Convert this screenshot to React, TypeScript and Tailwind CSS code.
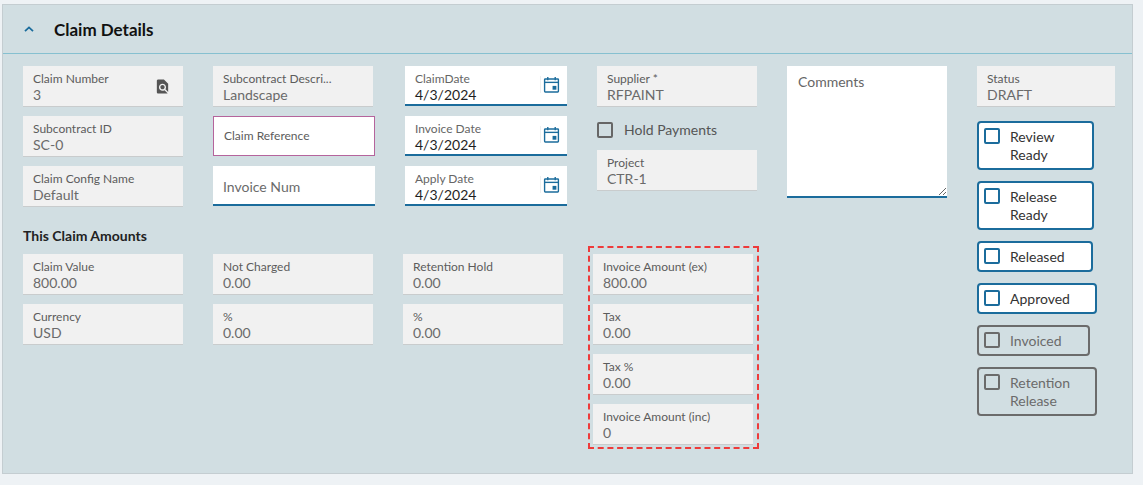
import React from "react";

const blue = "#1b6c9c";

function SearchDocIcon() {
  return (
    <svg viewBox="0 0 24 24" className="h-[17px] w-[17px] fill-[#555]" aria-hidden="true">
      <path d="M20 19.59V8l-6-6H6c-1.1 0-1.99.9-1.99 2L4 20c0 1.1.89 2 1.99 2H18c.45 0 .85-.15 1.19-.4l-4.43-4.43c-.8.52-1.74.83-2.76.83-2.76 0-5-2.24-5-5s2.24-5 5-5 5 2.24 5 5c0 1.02-.31 1.96-.83 2.75L20 19.59zM9 13c0 1.66 1.34 3 3 3s3-1.34 3-3-1.34-3-3-3-3 1.34-3 3z" />
    </svg>
  );
}

function CalendarIcon() {
  return (
    <svg viewBox="0 0 16 16" className="h-[17px] w-[17px]" fill="none" stroke={blue} strokeWidth="1.3" aria-hidden="true">
      <rect x="1.5" y="2.8" width="13" height="12.2" rx="0.6" />
      <line x1="1.5" y1="6" x2="14.5" y2="6" />
      <line x1="4.5" y1="1" x2="4.5" y2="4" />
      <line x1="11.5" y1="1" x2="11.5" y2="4" />
      <rect x="9" y="9.3" width="3.6" height="3.6" fill={blue} stroke="none" />
    </svg>
  );
}

function ReadField({ label, value, icon }: { label: string; value: string; icon?: React.ReactNode }) {
  return (
    <div className="flex h-[40px] w-[160px] items-start justify-between bg-[#f1f1f1] pl-[10px] pr-[12px] shadow-[0_1px_0_#c9cccd]">
      <div className="flex flex-col pt-[6px]">
        <span className="text-[12px] leading-[14px] text-[#5c5c5c]">{label}</span>
        <span className="text-[14px] leading-[18px] text-[#6a6a6a]">{value}</span>
      </div>
      {icon && <div className="self-center pt-[1px]">{icon}</div>}
    </div>
  );
}

function DateField({ label, value }: { label: string; value: string }) {
  return (
    <div className="flex h-[40px] w-[162px] items-start justify-between border-b-2 border-[#1b6c9c] bg-white pl-[10px] pr-[7px]">
      <div className="flex flex-col pt-[6px]">
        <span className="text-[12px] leading-[14px] text-[#666]">{label}</span>
        <span className="text-[14px] leading-[18px] text-[#1f1f1f]">{value}</span>
      </div>
      <div className="mt-[10px] border-l border-[#f0f0f0] pl-[2px]">
        <CalendarIcon />
      </div>
    </div>
  );
}

function CheckCard({ label, width, disabled }: { label: string; width: string; disabled?: boolean }) {
  return (
    <div
      className={
        disabled
          ? `flex items-start gap-[10px] rounded-[4px] border-2 border-[#6b6b6b] px-[5px] pb-[4px] pt-[5px] ${width}`
          : `flex items-start gap-[10px] rounded-[4px] border-2 border-[#1b6c9c] bg-white px-[5px] pb-[4px] pt-[5px] ${width}`
      }
    >
      <span
        className={
          disabled
            ? "h-[16px] w-[16px] shrink-0 rounded-[2px] border-2 border-[#6b6b6b]"
            : "h-[16px] w-[16px] shrink-0 rounded-[2px] border-2 border-[#1b6c9c]"
        }
      />
      <span className={disabled ? "text-[14px] leading-[18px] text-[#6b6b6b]" : "text-[14px] leading-[18px] text-[#333]"}>
        {label}
      </span>
    </div>
  );
}

export default function App() {
  return (
    <div className="min-h-screen bg-[#eef2f5] pl-[2px] pt-[4px] font-['Lato',sans-serif]">
      <section className="h-[470px] w-[1131px] border border-[#c4cdd1] bg-[#d1dee2]">
        <header className="flex h-[49px] items-center border-b border-[#86c0d0] pl-[21px]">
          <svg viewBox="0 0 10 6" className="h-[6px] w-[10px]" fill="none" stroke={blue} strokeWidth="1.8" aria-hidden="true">
            <path d="M1 5.2 5 1.4l4 3.8" />
          </svg>
          <h2 className="ml-[20px] pt-[2px] text-[17px] font-bold text-[#111]">Claim Details</h2>
        </header>

        <div className="flex pl-[20px] pt-[12px]">
          <div className="flex flex-col">
            <div className="flex gap-[30px]">
              <div className="flex flex-col gap-[10px]">
                <ReadField label="Claim Number" value="3" icon={<SearchDocIcon />} />
                <ReadField label="Subcontract ID" value="SC-0" />
                <ReadField label="Claim Config Name" value="Default" />
              </div>

              <div className="flex flex-col gap-[10px]">
                <ReadField label="Subcontract Descri..." value="Landscape" />
                <div className="h-[40px] w-[162px] border border-[#b5649c] bg-white pl-[10px] pt-[5px]">
                  <span className="text-[12px] leading-[14px] text-[#5c5c5c]">Claim Reference</span>
                </div>
                <input
                  placeholder="Invoice Num"
                  className="h-[40px] w-[162px] border-b-2 border-[#1b6c9c] bg-white px-[10px] pt-[2px] text-[14px] outline-none placeholder:text-[#6b6b6b]"
                />
              </div>

              <div className="flex flex-col gap-[10px]">
                <DateField label="ClaimDate" value="4/3/2024" />
                <DateField label="Invoice Date" value="4/3/2024" />
                <DateField label="Apply Date" value="4/3/2024" />
              </div>

              <div className="flex w-[160px] flex-col">
                <ReadField label="Supplier *" value="RFPAINT" />
                <div className="flex h-[44px] items-center pt-[3px]">
                  <span className="h-[16px] w-[16px] rounded-[2px] border-2 border-[#666]" />
                  <span className="ml-[11px] text-[14px] text-[#555]">Hold Payments</span>
                </div>
                <ReadField label="Project" value="CTR-1" />
              </div>

              <textarea
                placeholder="Comments"
                className="h-[132px] w-[160px] border-b-2 border-[#1b6c9c] bg-white px-[11px] pt-[6px] text-[14px] leading-[20px] outline-none placeholder:text-[#666]"
              />
            </div>

            <h3 className="mt-[20px] text-[14px] font-bold leading-[20px] text-[#222]">This Claim Amounts</h3>

            <div className="mt-[8px] flex gap-[30px]">
              <div className="flex flex-col gap-[10px]">
                <ReadField label="Claim Value" value="800.00" />
                <ReadField label="Currency" value="USD" />
              </div>
              <div className="flex flex-col gap-[10px]">
                <ReadField label="Not Charged" value="0.00" />
                <ReadField label="%" value="0.00" />
              </div>
              <div className="flex flex-col gap-[10px]">
                <ReadField label="Retention Hold" value="0.00" />
                <ReadField label="%" value="0.00" />
              </div>
              <div className="w-[160px]">
                <div className="-ml-[5px] -mt-[8px] flex w-[171px] flex-col gap-[10px] border-2 border-dashed border-[#ee3b3b] pb-[3px] pl-[3px] pr-[4px] pt-[6px]">
                  <ReadField label="Invoice Amount (ex)" value="800.00" />
                  <ReadField label="Tax" value="0.00" />
                  <ReadField label="Tax %" value="0.00" />
                  <ReadField label="Invoice Amount (inc)" value="0" />
                </div>
              </div>
            </div>
          </div>

          <div className="ml-[30px] flex w-[138px] flex-col">
            <div className="flex h-[40px] flex-col bg-[#f1f1f1] pl-[10px] pt-[6px] shadow-[0_1px_0_#c9cccd]">
              <span className="text-[12px] leading-[14px] text-[#5c5c5c]">Status</span>
              <span className="text-[14px] leading-[18px] text-[#6a6a6a]">DRAFT</span>
            </div>
            <div className="mt-[15px] flex flex-col items-start gap-[11px]">
              <CheckCard label="Review Ready" width="w-[117px]" />
              <CheckCard label="Release Ready" width="w-[117px]" />
              <CheckCard label="Released" width="w-[116px]" />
              <CheckCard label="Approved" width="w-[120px]" />
              <CheckCard label="Invoiced" width="w-[113px]" disabled />
              <CheckCard label="Retention Release" width="w-[120px]" disabled />
            </div>
          </div>
        </div>
      </section>
    </div>
  );
}
